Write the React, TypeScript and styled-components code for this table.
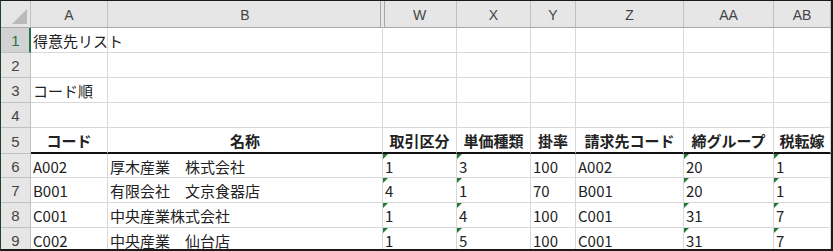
import React from "react";
import styled, { createGlobalStyle, css } from "styled-components";

const GlobalStyle = createGlobalStyle`
  html, body { margin: 0; padding: 0; background: #ffffff; }
  body { overflow: hidden; }
`;

const COLS = "30px 77px 275px 74px 74px 45px 108px 90px 57px";
const HEAD_BG = "#e6e6e6";
const HEAD_LINE = "#c0c0c0";
const GRID = "#d8d8d8";
const GREEN = "#217346";

const Sheet = styled.div`
  width: 833px;
  height: 251px;
  box-sizing: border-box;
  border-top: 1px solid #1a1a1a;
  border-left: 1px solid #23422e;
  border-right: 2px solid #1a1a1a;
  border-bottom: 2px solid #1a1a1a;
  overflow: hidden;
  background: #ffffff;
  font-family: "Noto Sans CJK JP", "Noto Sans", sans-serif;
`;

const Row = styled.div<{ $h: number }>`
  display: grid;
  grid-template-columns: ${COLS};
  height: ${(p) => p.$h}px;
`;

const Corner = styled.div`
  position: relative;
  box-sizing: border-box;
  background: ${HEAD_BG};
  border-right: 1px solid ${HEAD_LINE};
  border-bottom: 1px solid #a8a8a8;
  &::after {
    content: "";
    position: absolute;
    right: 3px;
    bottom: 3px;
    width: 15px;
    height: 15px;
    background: #b9b9b9;
    clip-path: polygon(100% 0, 100% 100%, 0 100%);
  }
`;

const ColHead = styled.div<{ $mark?: "before" | "after" }>`
  box-sizing: border-box;
  display: flex;
  align-items: center;
  justify-content: center;
  background: ${HEAD_BG};
  border-right: 1px solid ${HEAD_LINE};
  border-bottom: 1px solid #a8a8a8;
  color: #444444;
  font-family: "Liberation Sans", Arial, sans-serif;
  font-size: 14px;
  padding-top: 1px;
  ${(p) =>
    p.$mark === "after" &&
    css`
      border-right-color: ${HEAD_BG};
      box-shadow: inset -1px 0 0 ${HEAD_BG}, inset -2px 0 0 #a6a6a6;
    `}
  ${(p) =>
    p.$mark === "before" &&
    css`
      box-shadow: inset 1px 0 0 ${HEAD_BG}, inset 2px 0 0 #a6a6a6;
    `}
`;

const RowHead = styled.div<{ $active?: boolean; $thick?: boolean }>`
  box-sizing: border-box;
  display: flex;
  align-items: center;
  justify-content: center;
  background: ${(p) => (p.$active ? "#d2d2d2" : HEAD_BG)};
  color: ${(p) => (p.$active ? GREEN : "#444444")};
  border-right: ${(p) => (p.$active ? `2px solid ${GREEN}` : `1px solid ${HEAD_LINE}`)};
  border-bottom: 1px solid ${HEAD_LINE};
  font-family: "Liberation Sans", Arial, sans-serif;
  font-size: 15px;
  padding-top: 1px;
  ${(p) => p.$active && css`padding-left: 1px;`}
`;

const Cell = styled.div<{
  $bold?: boolean;
  $center?: boolean;
  $flag?: boolean;
  $thick?: boolean;
}>`
  position: relative;
  box-sizing: border-box;
  display: flex;
  align-items: center;
  justify-content: ${(p) => (p.$center ? "center" : "flex-start")};
  padding: 1px 2px 0 2px;
  border-right: 1px solid ${GRID};
  border-bottom: ${(p) => (p.$thick ? "2px solid #111111" : `1px solid ${GRID}`)};
  color: #222222;
  font-size: 15px;
  font-weight: ${(p) => (p.$bold ? 700 : 400)};
  white-space: nowrap;
  overflow: visible;
  ${(p) =>
    p.$flag &&
    css`
      &::before {
        content: "";
        position: absolute;
        left: 0;
        top: 0;
        width: 5px;
        height: 5px;
        background: #1f7a33;
        clip-path: polygon(0 0, 100% 0, 0 100%);
      }
    `}
`;

type Rec = {
  code: string;
  name: string;
  torihiki: string;
  tanka: string;
  rate: string;
  seikyu: string;
  shime: string;
  zei: string;
};

const records: Rec[] = [
  { code: "A002", name: "厚木産業　株式会社", torihiki: "1", tanka: "3", rate: "100", seikyu: "A002", shime: "20", zei: "1" },
  { code: "B001", name: "有限会社　文京食器店", torihiki: "4", tanka: "1", rate: "70", seikyu: "B001", shime: "20", zei: "1" },
  { code: "C001", name: "中央産業株式会社", torihiki: "1", tanka: "4", rate: "100", seikyu: "C001", shime: "31", zei: "7" },
  { code: "C002", name: "中央産業　仙台店", torihiki: "1", tanka: "5", rate: "100", seikyu: "C001", shime: "31", zei: "7" },
];

const letters = ["A", "B", "W", "X", "Y", "Z", "AA", "AB"];

function EmptyRow({ n, text, active }: { n: number; text?: string; active?: boolean }) {
  return (
    <Row $h={25}>
      <RowHead $active={active}>{n}</RowHead>
      <Cell>{text}</Cell>
      <Cell />
      <Cell />
      <Cell />
      <Cell />
      <Cell />
      <Cell />
      <Cell />
    </Row>
  );
}

export default function App() {
  return (
    <>
      <GlobalStyle />
      <Sheet>
        <Row $h={27}>
          <Corner />
          {letters.map((l) => (
            <ColHead key={l} $mark={l === "B" ? "after" : l === "W" ? "before" : undefined}>
              {l}
            </ColHead>
          ))}
        </Row>
        <EmptyRow n={1} text="得意先リスト" active />
        <EmptyRow n={2} />
        <EmptyRow n={3} text="コード順" />
        <EmptyRow n={4} />
        <Row $h={26}>
          <RowHead>5</RowHead>
          <Cell $bold $center $thick>コード</Cell>
          <Cell $bold $center $thick>名称</Cell>
          <Cell $bold $center $thick>取引区分</Cell>
          <Cell $bold $center $thick>単価種類</Cell>
          <Cell $bold $center $thick>掛率</Cell>
          <Cell $bold $center $thick>請求先コード</Cell>
          <Cell $bold $center $thick>締グループ</Cell>
          <Cell $bold $center $thick>税転嫁</Cell>
        </Row>
        {records.map((r, i) => (
          <Row key={r.code + i} $h={i === 0 ? 24 : 25}>
            <RowHead>{6 + i}</RowHead>
            <Cell>{r.code}</Cell>
            <Cell>{r.name}</Cell>
            <Cell $flag>{r.torihiki}</Cell>
            <Cell $flag>{r.tanka}</Cell>
            <Cell>{r.rate}</Cell>
            <Cell>{r.seikyu}</Cell>
            <Cell $flag>{r.shime}</Cell>
            <Cell $flag>{r.zei}</Cell>
          </Row>
        ))}
      </Sheet>
    </>
  );
}
